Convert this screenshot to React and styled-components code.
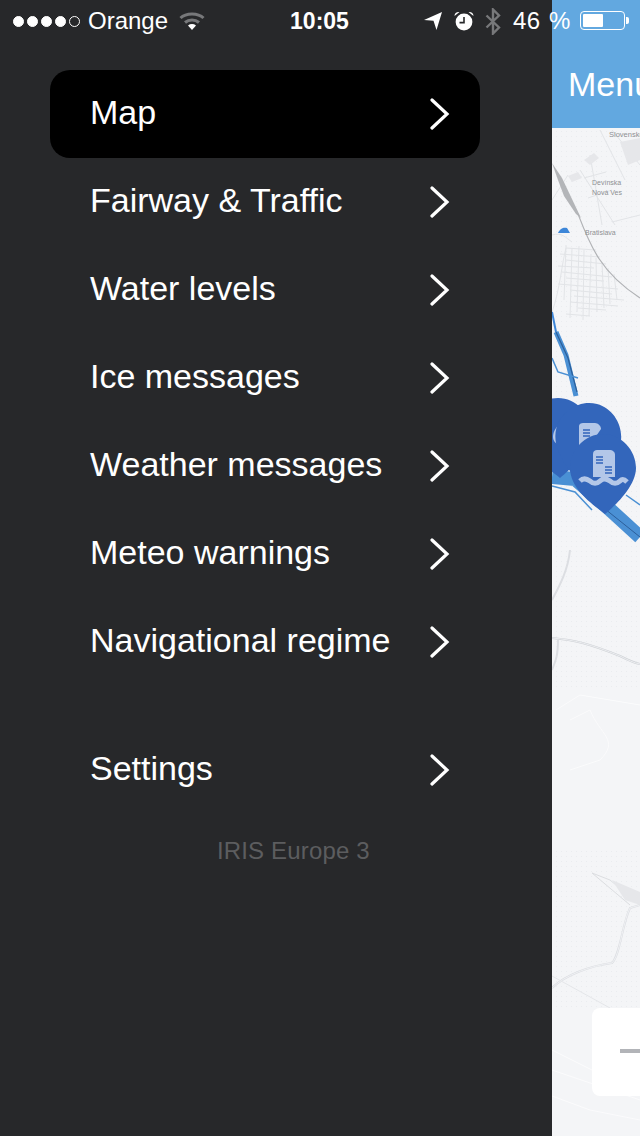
import styled, { createGlobalStyle } from "styled-components";

const GlobalStyle = createGlobalStyle`
  html, body {
    margin: 0;
    padding: 0;
    background: #27282a;
  }
  * {
    box-sizing: border-box;
  }
`;

const Screen = styled.div`
  position: relative;
  width: 640px;
  height: 1136px;
  display: flex;
  overflow: hidden;
  font-family: "Liberation Sans", Arial, sans-serif;
  color: #ffffff;
`;

const StatusBar = styled.div`
  position: absolute;
  top: 0;
  left: 0;
  width: 640px;
  height: 42px;
  padding: 0 11px 0 13px;
  display: grid;
  grid-template-columns: 1fr auto 1fr;
  align-items: center;
  font-size: 24px;
`;

const StatusLeft = styled.div`
  display: flex;
  align-items: center;
`;

const StatusRight = styled.div`
  display: flex;
  align-items: center;
  justify-content: flex-end;
`;

const Dots = styled.div`
  display: flex;
  gap: 3px;
  margin-right: 8px;
`;

const Dot = styled.span`
  width: 11px;
  height: 11px;
  border-radius: 50%;
  border: 1px solid #ffffff;
  background: ${(props) => (props.$filled ? "#ffffff" : "transparent")};
`;

const Clock = styled.div`
  margin-right: 3px;
  font-size: 23px;
  font-weight: 700;
`;

const Percent = styled.span`
  margin: 0 9px 0 12px;
  word-spacing: 1px;
  letter-spacing: 0.6px;
`;

const Battery = styled.div`
  position: relative;
  width: 45px;
  height: 19px;
  margin: 0 4px 2px 0;
  padding: 2px;
  border: 1px solid #ffffff;
  border-radius: 4px;

  &::after {
    content: "";
    position: absolute;
    top: 5px;
    right: -5px;
    width: 3px;
    height: 7px;
    border-radius: 0 2px 2px 0;
    background: #ffffff;
  }
`;

const BatteryLevel = styled.div`
  width: 52%;
  height: 100%;
  border-radius: 1px;
  background: #ffffff;
`;

const Drawer = styled.nav`
  width: 552px;
  height: 100%;
  flex-shrink: 0;
  padding: 70px 0 0 50px;
  background: #27282a;
`;

const MenuItem = styled.div`
  width: 430px;
  height: 88px;
  margin-top: ${(props) => (props.$spaced ? "40px" : "0")};
  padding: 0 30px 0 40px;
  display: flex;
  align-items: center;
  justify-content: space-between;
  border-radius: 20px;
  background: ${(props) => (props.$active ? "#000000" : "transparent")};
  font-size: 34px;
`;

const MenuLabel = styled.span`
  margin-bottom: 3px;
`;

const Chevron = styled.svg`
  width: 20px;
  height: 32px;
`;

const Version = styled.div`
  margin: 23px 0 0 167px;
  font-size: 24px;
  line-height: 28px;
  letter-spacing: 0.15px;
  color: #5c5d5f;
`;

const MapPanel = styled.main`
  position: relative;
  flex: 1;
  display: flex;
  flex-direction: column;
  background: #f4f5f7;
`;

const Header = styled.header`
  height: 128px;
  padding: 66px 0 0 16px;
  overflow: hidden;
  background: #62a8e0;
  font-size: 34px;
  line-height: 36px;
  white-space: nowrap;
`;

const MapCanvas = styled.svg`
  display: block;
  width: 88px;
  height: 1008px;
`;

const ZoomCard = styled.div`
  position: absolute;
  top: 1008px;
  left: 40px;
  width: 60px;
  height: 88px;
  border-radius: 8px;
  background: #ffffff;
`;

const ZoomMinus = styled.div`
  position: absolute;
  top: 41px;
  left: 28px;
  width: 30px;
  height: 4px;
  background: #b2b4b8;
`;

const items = [
  { label: "Map", active: true },
  { label: "Fairway & Traffic" },
  { label: "Water levels" },
  { label: "Ice messages" },
  { label: "Weather messages" },
  { label: "Meteo warnings" },
  { label: "Navigational regime" },
  { label: "Settings", spaced: true },
];

function ChevronIcon() {
  return (
    <Chevron viewBox="0 0 20 32">
      <path
        d="M2 2 L17 16 L2 30"
        fill="none"
        stroke="#ffffff"
        strokeWidth="3.2"
        strokeLinecap="round"
        strokeLinejoin="miter"
      />
    </Chevron>
  );
}

function WifiIcon() {
  return (
    <svg width="26" height="20" viewBox="0 0 26 20" style={{ marginLeft: 11 }}>
      <g fill="none" stroke="#77787a" strokeWidth="3">
        <path d="M1.5 7 C7 1.5 19 1.5 24.5 7" />
        <path d="M6 11.5 C10 8 16 8 20 11.5" />
      </g>
      <path d="M9 14.5 C11.5 12.6 14.5 12.6 17 14.5 L13 19 Z" fill="#ffffff" />
    </svg>
  );
}

function LocationIcon() {
  return (
    <svg width="18" height="18" viewBox="0 0 18 18" style={{ marginRight: 12 }}>
      <path d="M18 0 L12.5 18 L9.5 8.8 L0 8 Z" fill="#ffffff" />
    </svg>
  );
}

function AlarmIcon() {
  return (
    <svg width="20" height="20" viewBox="0 0 20 20" style={{ marginRight: 11 }}>
      <circle cx="10" cy="11" r="8.4" fill="#ffffff" />
      <path d="M10 6 V11.6 H5.5" fill="none" stroke="#27282a" strokeWidth="1.6" />
      <path d="M0.5 5 C0.5 2 3 0.5 5.5 1 Z M19.5 5 C19.5 2 17 0.5 14.5 1 Z" fill="#ffffff" />
    </svg>
  );
}

function BluetoothIcon() {
  return (
    <svg width="16" height="27" viewBox="0 0 16 27">
      <path
        d="M1.5 7.5 L14 19.5 L8 25.5 V1.5 L14 7.5 L1.5 19.5"
        fill="none"
        stroke="#77787a"
        strokeWidth="2.4"
      />
    </svg>
  );
}

// all map parts use screenshot coordinates, see viewBox
function Pin({ x, y, rotate = 0, children }) {
  return (
    <g transform={`translate(${x} ${y}) rotate(${rotate})`}>
      <path
        d="M2 49 C-8 41 -33 25 -33 3 C-33 -15 -18 -31 0 -31 C18 -31 33 -15 33 3 C33 21 12 41 2 49 Z"
        fill="#3366bb"
      />
      {children}
    </g>
  );
}

function PinGlyph() {
  return (
    <g>
      <path d="M-10 12 V-11 C-10 -14 -8 -15 -6 -15 H6 C10 -15 12 -13 12 -10 V12 Z" fill="#b3c7e8" />
      <path
        d="M-7 -8 H0 M-7 -5 H0 M-7 -2 H0 M2 2 H9 M2 5 H9 M2 8 H9"
        stroke="#3366bb"
        strokeWidth="1.5"
      />
      <path
        d="M-23 16 C-20 13 -17 13 -13 16 C-10 19 -6 19 -3 16 C0 13 3 13 7 16 C10 19 14 19 17 16 C19 14 21 14 24 17"
        fill="none"
        stroke="#b3c7e8"
        strokeWidth="5"
      />
    </g>
  );
}

function MapDrawing() {
  return (
    <MapCanvas viewBox="552 128 88 1008">
      <defs>
        <pattern id="land-dots" width="5" height="5" patternUnits="userSpaceOnUse">
          <rect x="1" y="1" width="1" height="1" fill="#eaecef" />
        </pattern>
      </defs>
      <rect x="552" y="128" width="88" height="560" fill="url(#land-dots)" />
      <rect x="552" y="850" width="88" height="160" fill="url(#land-dots)" />

      {/* Bratislava built up area */}
      <g fill="none" stroke="#e2e4e7" strokeWidth="1">
        <path d="M566 248 L596 250 M560 254 L600 257 M566 260 L606 264 M558 266 L594 268 M562 272 L612 277 M566 278 L604 281 M558 284 L618 289 M570 290 L612 294 M574 296 L624 300 M570 302 L618 306 M578 308 L606 310 M566 314 L590 316" />
        <path d="M566 245 L564 300 M572 248 L570 318 M579 246 L577 312 M584 250 L583 320 M591 254 L589 316 M596 258 L597 312 M602 262 L604 308 M608 268 L610 304 M614 274 L617 300" />
        <path d="M600 130 L625 180 M612 130 L640 165 M590 155 L602 225 M580 170 L615 225 M584 178 L606 172 M588 198 L612 190 M612 222 L640 215" />
        <path d="M568 175 L552 200 M552 235 C562 232 566 238 572 242 M552 312 C560 290 562 262 566 248" />
      </g>
      <g fill="#e6e7ea">
        <path d="M620 142 L640 138 V160 L628 165 Z" />
        <path d="M584 160 L594 153 L599 158 L590 165 Z" />
        <path d="M568 176 L578 172 L582 178 L572 182 Z" />
      </g>

      {/* railway */}
      <path
        d="M552 163 L562 178 L581 218 L576 214 L564 196 L558 180 Z"
        fill="#b3b5b8"
      />
      <path d="M578 214 C590 245 600 272 640 298" fill="none" stroke="#b0b2b5" strokeWidth="1.2" />

      {/* danube */}
      <path d="M558 233 C560 228 564 227 567 228 L570 233 Z" fill="#3d86d8" />
      <path d="M552 312 L556 332" fill="none" stroke="#3d86d8" strokeWidth="2" />
      <path d="M556 332 L566 355 L576 396" fill="none" stroke="#4a90d4" strokeWidth="5" />
      <path d="M556 332 L568 358 L577 392" fill="none" stroke="#2c5f9a" strokeWidth="1.2" />
      <path d="M552 358 L558 372 L578 378" fill="none" stroke="#4a90d4" strokeWidth="1.5" />
      <path d="M552 477 L575 479 L605 505 L640 537" fill="none" stroke="#4a90d4" strokeWidth="14" />
      <path d="M600 505 L640 537" fill="none" stroke="#2c5f9a" strokeWidth="1" />
      <path d="M552 486 L575 492 L592 510" fill="none" stroke="#4a90d4" strokeWidth="1.5" />
      <path d="M626 495 L640 505" fill="none" stroke="#4a90d4" strokeWidth="1.5" />

      {/* pins */}
      <Pin x={558} y={429} />
      <path d="M563 421 C556 426 553 432 553 437 C553 442 557 445 563 445 Z" fill="#b3c7e8" />
      <path d="M566 450 L575 455 L573 460 L566 456 Z" fill="#b3c7e8" />
      <Pin x={589} y={434} rotate={15} />
      <path d="M579 445 V426 C579 424 581 423 583 423 H595 C598 423 601 426 601 429 L590 445 Z" fill="#b3c7e8" />
      <path d="M583 430 H590 M583 433 H590 M583 436 H590" stroke="#3366bb" strokeWidth="1.5" />
      <Pin x={603} y={465}>
        <PinGlyph />
      </Pin>

      {/* roads */}
      <g fill="none" stroke="#cfd2d6" strokeWidth="2">
        <path d="M552 638 C575 640 590 644 620 656 C628 660 634 663 640 664" />
      </g>
      <g fill="none" stroke="#dcdee2" strokeWidth="2">
        <path d="M570 550 C568 570 560 585 552 600" />
        <path d="M558 640 C558 655 556 660 552 670" />
        <path d="M552 988 C565 975 590 966 612 963 C620 955 622 925 630 908 L640 905" />
      </g>
      <g fill="none" stroke="#f4f5f7" strokeWidth="0.8">
        <path d="M552 638 C575 640 590 644 620 656 C628 660 634 663 640 664" />
        <path d="M552 988 C565 975 590 966 612 963 C620 955 622 925 630 908 L640 905" />
      </g>
      <path d="M592 873 L630 905 M592 873 L610 880 L640 905" fill="none" stroke="#dcdee1" strokeWidth="1" />
      <path d="M612 880 L640 892 V905 L625 900 Z" fill="#e6e7ea" />
      <path d="M552 976 L610 1008" fill="none" stroke="#e4e6e9" strokeWidth="1" />

      {/* faint contour lines */}
      <g fill="none" stroke="#fbfbfc" strokeWidth="1">
        <path d="M556 710 L580 695 L640 705" />
        <path d="M570 720 L590 710 C600 735 620 740 600 760 L570 770" />
        <path d="M552 1070 L640 1100" />
        <path d="M552 1050 L592 1070" />
        <path d="M552 1096 L590 1110 L640 1120" />
      </g>
      <g fill="#8e9093" fontFamily="Liberation Sans, Arial, sans-serif">
        <text x="609" y="137" fontSize="7.5">Slovensko</text>
        <text x="592" y="185" fontSize="7">Devínska</text>
        <text x="592" y="195" fontSize="7">Nová Ves</text>
        <text x="585" y="235" fontSize="7">Bratislava</text>
      </g>
    </MapCanvas>
  );
}

export default function App() {
  return (
    <Screen>
      <GlobalStyle />
      <Drawer>
        {items.map((item) => (
          <MenuItem key={item.label} $active={item.active} $spaced={item.spaced}>
            <MenuLabel>{item.label}</MenuLabel>
            <ChevronIcon />
          </MenuItem>
        ))}
        <Version>IRIS Europe 3</Version>
      </Drawer>
      <MapPanel>
        <Header>Menu</Header>
        <MapDrawing />
        <ZoomCard>
          <ZoomMinus />
        </ZoomCard>
      </MapPanel>
      <StatusBar>
        <StatusLeft>
          <Dots>
            {[1, 2, 3, 4].map((n) => (
              <Dot key={n} $filled />
            ))}
            <Dot />
          </Dots>
          Orange
          <WifiIcon />
        </StatusLeft>
        <Clock>10:05</Clock>
        <StatusRight>
          <LocationIcon />
          <AlarmIcon />
          <BluetoothIcon />
          <Percent>46 %</Percent>
          <Battery>
            <BatteryLevel />
          </Battery>
        </StatusRight>
      </StatusBar>
    </Screen>
  );
}
